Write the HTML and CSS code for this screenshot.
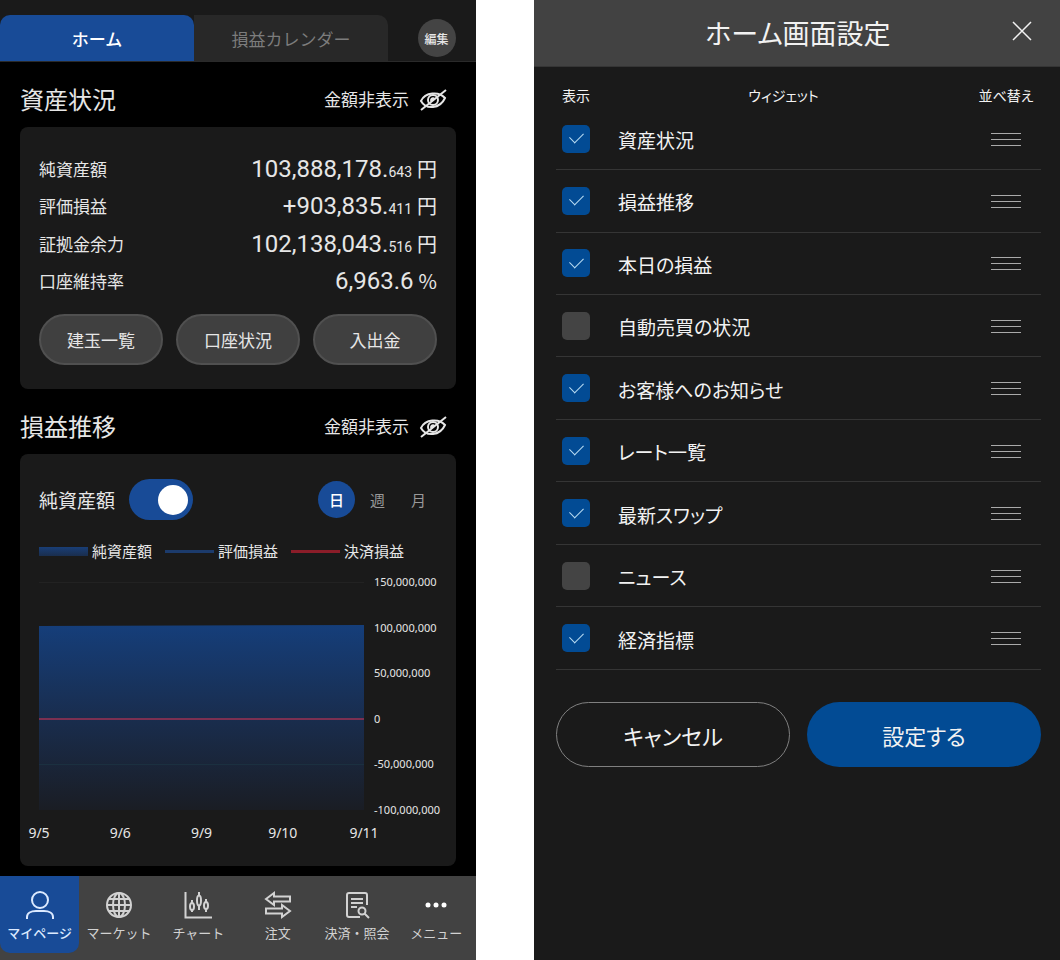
FILE: index.html
```html
<!DOCTYPE html>
<html lang="ja">
<head>
<meta charset="utf-8">
<meta name="viewport" content="width=device-width, initial-scale=1">
<title>ホーム画面設定</title>
<link rel="stylesheet" href="styles.css">
</head>
<body>
<svg class="defs" aria-hidden="true">
  <symbol id="eye-off" viewBox="0 0 28 24">
    <path d="M2 14C6 5 20 4 26 11C21 22 7 23 2 14Z"/>
    <circle cx="14" cy="13" r="5"/>
    <path d="M12.500 14.500A2 2 0 0 1 15 11.500M2 23L27 3"/>
  </symbol>
  <symbol id="grip" viewBox="0 0 30 14">
    <path d="M0 1.500H30M0 7.500H30M0 13.500H30"/>
  </symbol>
</svg>
<div class="screens">
  <section class="home">
    <header class="tabs">
      <button class="tab tab-active" type="button">ホーム</button>
      <button class="tab" type="button">損益カレンダー</button>
      <div class="edit-area"><button class="edit" type="button">編集</button></div>
    </header>

    <main class="content">
      <div class="section-head">
        <h2>資産状況</h2>
        <button class="mask" type="button">金額非表示<svg class="eye"><use href="#eye-off"/></svg></button>
      </div>
      <div class="card">
        <dl class="assets">
          <div><dt>純資産額</dt><dd>103,888,178.<small>643</small><span>円</span></dd></div>
          <div><dt>評価損益</dt><dd>+903,835.<small>411</small><span>円</span></dd></div>
          <div><dt>証拠金余力</dt><dd>102,138,043.<small>516</small><span>円</span></dd></div>
          <div><dt>口座維持率</dt><dd>6,963.6<span>%</span></dd></div>
        </dl>
        <div class="actions">
          <button type="button">建玉一覧</button>
          <button type="button">口座状況</button>
          <button type="button">入出金</button>
        </div>
      </div>

      <div class="section-head">
        <h2>損益推移</h2>
        <button class="mask" type="button">金額非表示<svg class="eye"><use href="#eye-off"/></svg></button>
      </div>
      <div class="card chart-card">
        <div class="chart-controls">
          <label class="switch">純資産額<input type="checkbox" role="switch" checked></label>
          <div class="periods">
            <button class="period-active" type="button">日</button>
            <button type="button">週</button>
            <button type="button">月</button>
          </div>
        </div>
        <ul class="legend">
          <li class="legend-net">純資産額</li>
          <li class="legend-open">評価損益</li>
          <li class="legend-closed">決済損益</li>
        </ul>
        <div class="chart">
          <svg class="plot" viewBox="0 0 325 228" preserveAspectRatio="none" role="img" aria-label="純資産額の推移">
            <defs>
              <linearGradient id="area" x1="0" y1="0" x2="0" y2="1">
                <stop offset="0" stop-color="#153e7a"/>
                <stop offset="0.500" stop-color="#192d4e"/>
                <stop offset="1" stop-color="#1a1d24"/>
              </linearGradient>
            </defs>
            <path d="M0 .5H325" stroke="#222"/>
            <path d="M0 44L325 43V228H0Z" fill="url(#area)" stroke="none"/>
            <path d="M0 182.500H325" stroke="#1b3040"/>
            <path d="M0 137H325" stroke="#7b3051" stroke-width="2"/>
          </svg>
          <div class="y-axis">
            <span>150,000,000</span><span>100,000,000</span><span>50,000,000</span><span>0</span><span>-50,000,000</span><span>-100,000,000</span>
          </div>
          <div class="x-axis"><span>9/5</span><span>9/6</span><span>9/9</span><span>9/10</span><span>9/11</span></div>
        </div>
      </div>
    </main>

    <nav class="bottom-nav">
      <a class="nav-active" href="#"><svg viewBox="0 0 28 28"><circle cx="14" cy="9" r="8"/><path d="M1 28V26C1 22 5 20 10 20H18C23 20 27 22 27 26V28"/></svg>マイページ</a>
      <a href="#"><svg viewBox="0 0 28 28"><circle cx="14" cy="14" r="12"/><ellipse cx="14" cy="14" rx="6" ry="12"/><path d="M14 2V26M2 14H26M4 8H24M4 20H24"/></svg>マーケット</a>
      <a href="#"><svg viewBox="0 0 28 28"><path d="M1.500 1V26.500H28M8 9V21M15 1V19M22 8V21"/><g class="nav-candle"><ellipse cx="8" cy="15.500" rx="2" ry="3.500"/><ellipse cx="15" cy="9.500" rx="2" ry="5"/><ellipse cx="22" cy="14.500" rx="2" ry="3.500"/></g></svg>チャート</a>
      <a href="#"><svg viewBox="0 0 28 28"><path d="M2 8L10 2V5.500H26V10.500H10V14ZM26 20L18 14V17.500H2V22.500H18V26Z"/></svg>注文</a>
      <a href="#"><svg viewBox="0 0 28 28"><path d="M24 14V4Q24 2 22 2H6Q4 2 4 4V24Q4 26 6 26H17M8 8H20M8 12H20M8 16H14M21.500 22.500L26 27"/><circle cx="19" cy="20" r="3.500"/></svg>決済・照会</a>
      <a href="#"><svg viewBox="0 0 28 28"><g class="nav-dots"><circle cx="6" cy="14" r="2.500"/><circle cx="14" cy="14" r="2.500"/><circle cx="22" cy="14" r="2.500"/></g></svg>メニュー</a>
    </nav>
  </section>

  <section class="settings">
    <header class="settings-head">
      <h1>ホーム画面設定</h1>
      <button class="close" type="button" aria-label="閉じる"><svg viewBox="0 0 20 20"><path d="M1 1L19 19M19 1L1 19"/></svg></button>
    </header>
    <form class="settings-body">
      <table class="widgets">
        <thead><tr><th class="col-show">表示</th><th>ウィジェット</th><th class="col-sort">並べ替え</th></tr></thead>
        <tbody>
          <tr><td><input id="w1" type="checkbox" checked></td><td><label for="w1">資産状況</label></td><td><button class="grip" type="button" aria-label="並べ替え"><svg><use href="#grip"/></svg></button></td></tr>
          <tr><td><input id="w2" type="checkbox" checked></td><td><label for="w2">損益推移</label></td><td><button class="grip" type="button" aria-label="並べ替え"><svg><use href="#grip"/></svg></button></td></tr>
          <tr><td><input id="w3" type="checkbox" checked></td><td><label for="w3">本日の損益</label></td><td><button class="grip" type="button" aria-label="並べ替え"><svg><use href="#grip"/></svg></button></td></tr>
          <tr><td><input id="w4" type="checkbox"></td><td><label for="w4">自動売買の状況</label></td><td><button class="grip" type="button" aria-label="並べ替え"><svg><use href="#grip"/></svg></button></td></tr>
          <tr><td><input id="w5" type="checkbox" checked></td><td><label for="w5">お客様へのお知らせ</label></td><td><button class="grip" type="button" aria-label="並べ替え"><svg><use href="#grip"/></svg></button></td></tr>
          <tr><td><input id="w6" type="checkbox" checked></td><td><label for="w6">レート一覧</label></td><td><button class="grip" type="button" aria-label="並べ替え"><svg><use href="#grip"/></svg></button></td></tr>
          <tr><td><input id="w7" type="checkbox" checked></td><td><label for="w7">最新スワップ</label></td><td><button class="grip" type="button" aria-label="並べ替え"><svg><use href="#grip"/></svg></button></td></tr>
          <tr><td><input id="w8" type="checkbox"></td><td><label for="w8">ニュース</label></td><td><button class="grip" type="button" aria-label="並べ替え"><svg><use href="#grip"/></svg></button></td></tr>
          <tr><td><input id="w9" type="checkbox" checked></td><td><label for="w9">経済指標</label></td><td><button class="grip" type="button" aria-label="並べ替え"><svg><use href="#grip"/></svg></button></td></tr>
        </tbody>
      </table>
      <div class="form-actions">
        <button class="cancel" type="button">キャンセル</button>
        <button class="submit" type="button">設定する</button>
      </div>
    </form>
  </section>
</div>
</body>
</html>
```

FILE: styles.css
```css
* { box-sizing: border-box; }

body {
  margin: 0;
  background: #fff;
  color: #e6e6e6;
  font-family: "Noto Sans CJK JP", sans-serif;
}

h1, h2, dl, dd, ul { margin: 0; padding: 0; font-weight: 400; }
button { padding: 0; border: 0; background: none; color: inherit; font: inherit; cursor: pointer; }
svg { fill: none; stroke: currentColor; }
.defs { display: none; }

.screens {
  display: grid;
  grid-template-columns: 476fr 526fr;
  column-gap: 58px;
  min-height: 100vh;
}

/* Home screen */
.home { display: flex; flex-direction: column; min-width: 0; background: #000; }

.tabs {
  display: grid;
  grid-template-columns: 194fr 194fr 88fr;
  height: 62px;
  padding-top: 15px;
  border-bottom: 1px solid #2a2a2a;
  background: #1a1a1a;
}
.tab { border-radius: 0 10px 0 0; background: #282828; color: #7c7c7c; font-size: 17px; }
.tab-active { border-radius: 10px 10px 0 0; background: #184b97; color: #fff; font-weight: 500; }
.edit-area { display: flex; justify-content: center; align-items: center; padding-left: 9px; }
.edit { width: 38px; height: 38px; border-radius: 50%; background: #444; font-size: 12px; font-weight: 500; }

.content { flex: 1; padding: 0 20px; }
.section-head {
  display: flex;
  justify-content: space-between;
  align-items: center;
  height: 65px;
  padding: 8px 9px 0 0;
}
.section-head h2 { font-size: 24px; line-height: 36px; }
.mask { display: flex; align-items: center; gap: 10px; font-size: 17px; line-height: 24px; }
.eye { width: 28px; height: 24px; stroke-width: 2; }

.card { padding: 23px 19px 24px; border-radius: 8px; background: #1a1a1a; }
.assets { display: grid; grid-template-rows: repeat(4, 1fr); height: 150px; }
.assets div { display: flex; justify-content: space-between; align-items: center; }
.assets dt { font-size: 17px; line-height: 24px; }
.assets dd { font-family: Roboto, sans-serif; font-size: 24px; line-height: 28px; }
.assets small { font-size: 14px; line-height: 20px; }
.assets span { margin-left: 5px; font-family: "Noto Sans CJK JP", sans-serif; font-size: 20px; line-height: 20px; }

.actions { display: grid; grid-template-columns: repeat(3, 1fr); gap: 13px; margin-top: 14px; }
.actions button { height: 51px; border: 2px solid #505050; border-radius: 26px; background: #404040; font-size: 17px; }

.chart-card { padding: 25px 19px 23px; }
.chart-controls { display: flex; justify-content: space-between; align-items: center; }
.switch { display: flex; align-items: center; gap: 14px; font-size: 19px; }
.switch input {
  appearance: none;
  display: flex;
  justify-content: flex-end;
  align-items: center;
  width: 64px;
  height: 41px;
  margin: 0;
  padding-right: 5px;
  border-radius: 21px;
  background: #184b97;
}
.switch input::before { content: ""; width: 30px; height: 30px; border-radius: 50%; background: #fff; }
.periods { display: flex; gap: 4px; }
.periods button { width: 37px; height: 37px; border-radius: 50%; color: #999; font-size: 15px; }
.periods .period-active { background: #184b97; color: #fff; font-weight: 500; }

.legend { display: flex; gap: 13px; margin-top: 20px; list-style: none; font-size: 15px; line-height: 22px; white-space: nowrap; }
.legend li { display: flex; align-items: center; gap: 4px; }
.legend li::before { content: ""; width: 49px; height: 3px; background: #1c3b6c; }
.legend .legend-net::before { height: 9px; background: linear-gradient(#193e76, #1a2e4e); }
.legend .legend-closed::before { background: #8b1d29; }

.chart { display: grid; grid-template-columns: 1fr 63px; column-gap: 10px; margin-top: 12px; }
.plot { width: 100%; height: 228px; margin: 8px 0; }
.y-axis {
  display: flex;
  flex-direction: column;
  justify-content: space-between;
  font: 11px/16px "Noto Sans", sans-serif;
  white-space: nowrap;
}
.x-axis { display: flex; justify-content: space-between; margin: 5px -20px 0; font: 14px/20px "Noto Sans", sans-serif; }
.x-axis span { width: 40px; text-align: center; }

.bottom-nav {
  display: grid;
  grid-template-columns: repeat(6, 1fr);
  height: 84px;
  padding-bottom: 7px;
  background: #424242;
}
.bottom-nav a {
  display: flex;
  flex-direction: column;
  align-items: center;
  gap: 4px;
  padding-top: 15px;
  color: #d2d2d2;
  font-size: 13px;
  line-height: 20px;
  text-decoration: none;
  white-space: nowrap;
}
.bottom-nav .nav-active { border-radius: 0 0 10px 10px; background: #184b97; color: #dceaff; font-weight: 500; }
.bottom-nav svg { width: 28px; height: 28px; stroke-width: 2; }
.nav-candle { fill: #424242; }
.nav-dots { fill: #fff; stroke: none; }

/* Widget settings */
.settings { min-width: 0; background: #1a1a1a; color: #f2f2f2; font-feature-settings: "palt"; }
.settings-head {
  display: grid;
  grid-template-columns: 1fr auto 1fr;
  align-items: center;
  height: 67px;
  padding: 0 28px 0 30px;
  border-bottom: 1px solid #353535;
  background: #424242;
}
.settings-head h1 { grid-column: 2; font-size: 27px; line-height: 40px; }
.close { justify-self: end; width: 20px; height: 20px; margin-bottom: 4px; }
.close svg { display: block; stroke-width: 1.5; }

.settings-body { padding: 0 19px 24px 22px; }
.widgets { width: 100%; height: 603px; border-collapse: collapse; table-layout: fixed; font-size: 19px; line-height: 28px; }
.widgets th { height: 41px; padding: 15px 0 0; font-size: 14px; font-weight: 400; line-height: 22px; white-space: nowrap; }
.col-show { width: 40px; }
.col-sort { width: 70px; }
.widgets td { padding: 0; border-bottom: 1px solid #353535; text-align: center; vertical-align: middle; }
.widgets td:nth-child(2) { padding: 3px 0 0 22px; text-align: left; }
.widgets input {
  appearance: none;
  display: grid;
  place-items: center;
  width: 28px;
  height: 28px;
  margin: 0 auto;
  border-radius: 5px;
  background: #444;
}
.widgets input:checked { background: #024b94; }
.widgets input:checked::before {
  content: "";
  width: 12px;
  height: 7px;
  margin-bottom: 5px;
  border: solid #b9dcf2;
  border-width: 0 0 1px 1px;
  transform: rotate(-45deg);
}
.grip { display: block; width: 30px; height: 14px; margin: 0 auto; color: #aaa; }
.grip svg { display: block; width: 30px; height: 14px; }

.form-actions { display: grid; grid-template-columns: 1fr 1fr; gap: 17px; margin-top: 32px; }
.form-actions button { height: 65px; border-radius: 33px; font-size: 22px; line-height: 32px; font-feature-settings: "palt"; }
.cancel { border: 1px solid #808080; }
.submit { background: #024b94; }
```
